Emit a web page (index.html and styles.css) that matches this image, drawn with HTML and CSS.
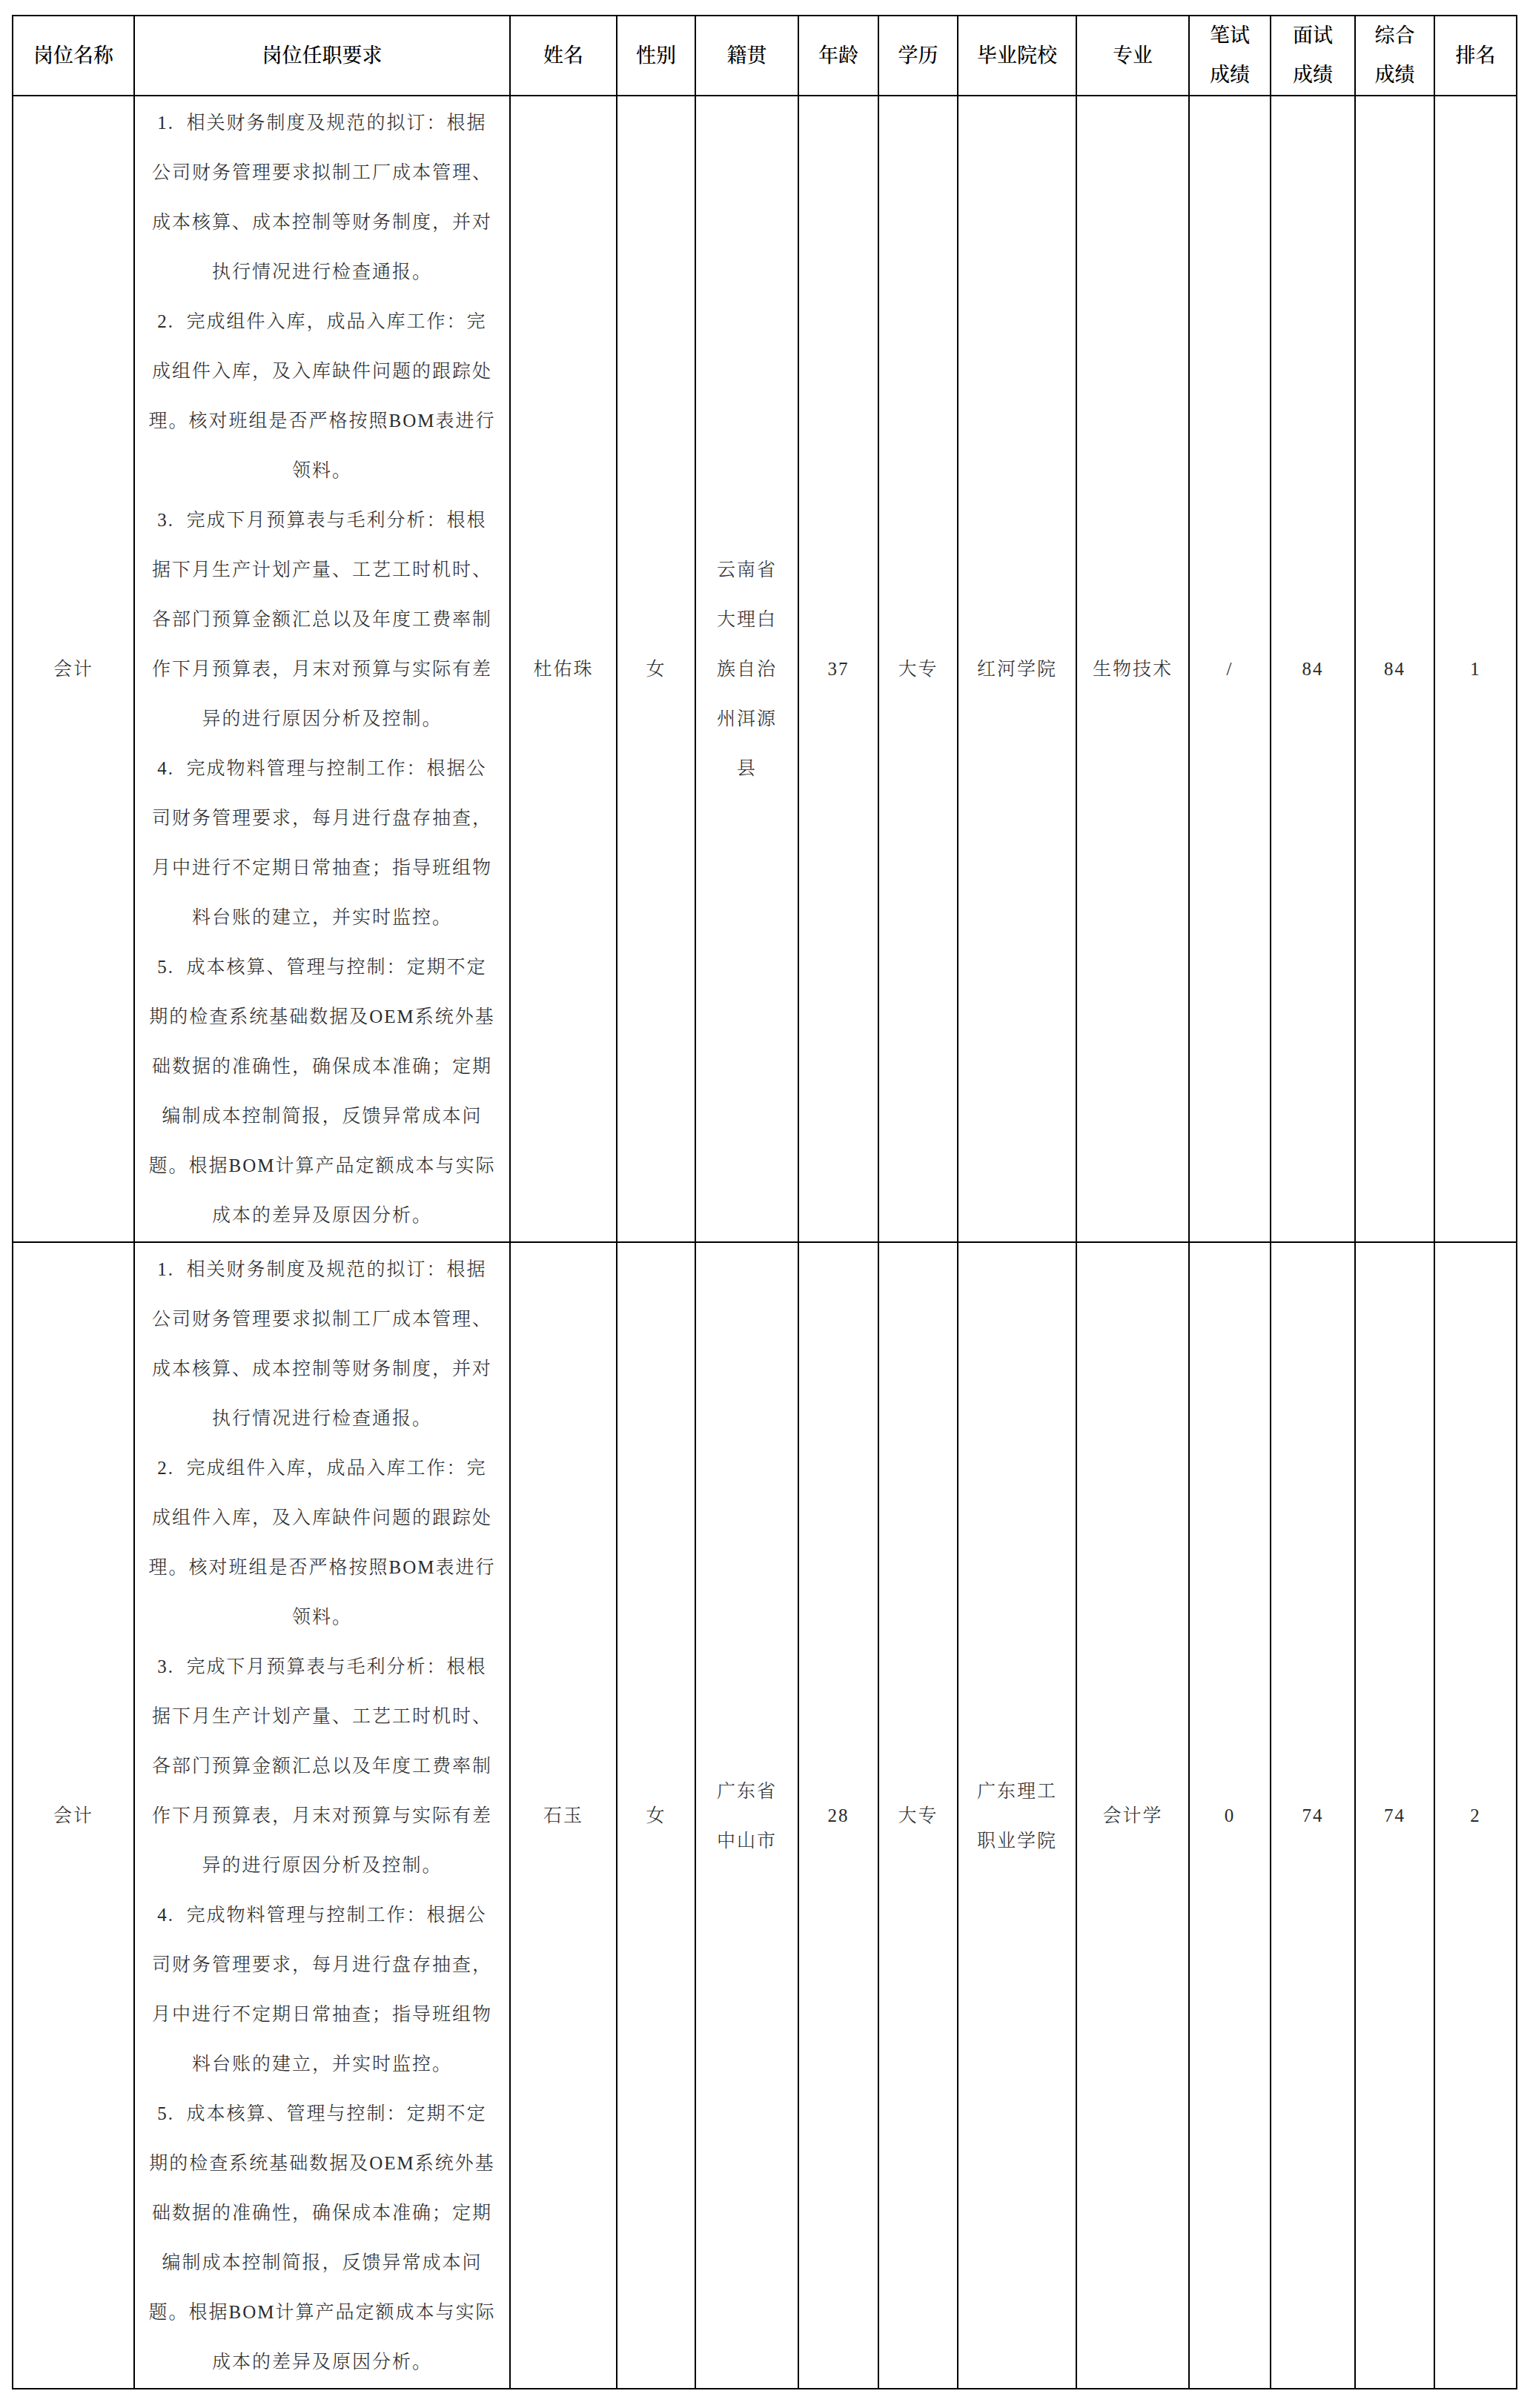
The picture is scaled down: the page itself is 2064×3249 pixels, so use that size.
FILE: index.html
```html
<!DOCTYPE html>
<html lang="zh-CN">
<head>
<meta charset="utf-8">
<title>岗位任职要求</title>
<link rel="stylesheet" href="styles.css">
</head>
<body>
<table class="grid">
  <colgroup>
    <col class="c1"><col class="c2"><col class="c3"><col class="c4"><col class="c5"><col class="c6"><col class="c7"><col class="c8"><col class="c9"><col class="c10"><col class="c11"><col class="c12"><col class="c13">
  </colgroup>
  <thead>
    <tr class="head">
      <th>岗位名称</th>
      <th>岗位任职要求</th>
      <th>姓名</th>
      <th>性别</th>
      <th>籍贯</th>
      <th>年龄</th>
      <th>学历</th>
      <th>毕业院校</th>
      <th>专业</th>
      <th>笔试<br>成绩</th>
      <th>面试<br>成绩</th>
      <th>综合<br>成绩</th>
      <th>排名</th>
    </tr>
  </thead>
  <tbody>
    <tr class="row">
      <td>会计</td>
      <td class="req">1.&nbsp; 相关财务制度及规范的拟订：根据<br>公司财务管理要求拟制工厂成本管理、<br>成本核算、成本控制等财务制度，并对<br>执行情况进行检查通报。<br>2.&nbsp; 完成组件入库，成品入库工作：完<br>成组件入库，及入库缺件问题的跟踪处<br>理。核对班组是否严格按照BOM表进行<br>领料。<br>3.&nbsp; 完成下月预算表与毛利分析：根根<br>据下月生产计划产量、工艺工时机时、<br>各部门预算金额汇总以及年度工费率制<br>作下月预算表，月末对预算与实际有差<br>异的进行原因分析及控制。<br>4.&nbsp; 完成物料管理与控制工作：根据公<br>司财务管理要求，每月进行盘存抽查，<br>月中进行不定期日常抽查；指导班组物<br>料台账的建立，并实时监控。<br>5.&nbsp; 成本核算、管理与控制：定期不定<br>期的检查系统基础数据及OEM系统外基<br>础数据的准确性，确保成本准确；定期<br>编制成本控制简报，反馈异常成本问<br>题。根据BOM计算产品定额成本与实际<br>成本的差异及原因分析。</td>
      <td>杜佑珠</td>
      <td>女</td>
      <td>云南省<br>大理白<br>族自治<br>州洱源<br>县</td>
      <td>37</td>
      <td>大专</td>
      <td>红河学院</td>
      <td>生物技术</td>
      <td>/</td>
      <td>84</td>
      <td>84</td>
      <td>1</td>
    </tr>
    <tr class="row">
      <td>会计</td>
      <td class="req">1.&nbsp; 相关财务制度及规范的拟订：根据<br>公司财务管理要求拟制工厂成本管理、<br>成本核算、成本控制等财务制度，并对<br>执行情况进行检查通报。<br>2.&nbsp; 完成组件入库，成品入库工作：完<br>成组件入库，及入库缺件问题的跟踪处<br>理。核对班组是否严格按照BOM表进行<br>领料。<br>3.&nbsp; 完成下月预算表与毛利分析：根根<br>据下月生产计划产量、工艺工时机时、<br>各部门预算金额汇总以及年度工费率制<br>作下月预算表，月末对预算与实际有差<br>异的进行原因分析及控制。<br>4.&nbsp; 完成物料管理与控制工作：根据公<br>司财务管理要求，每月进行盘存抽查，<br>月中进行不定期日常抽查；指导班组物<br>料台账的建立，并实时监控。<br>5.&nbsp; 成本核算、管理与控制：定期不定<br>期的检查系统基础数据及OEM系统外基<br>础数据的准确性，确保成本准确；定期<br>编制成本控制简报，反馈异常成本问<br>题。根据BOM计算产品定额成本与实际<br>成本的差异及原因分析。</td>
      <td>石玉</td>
      <td>女</td>
      <td>广东省<br>中山市</td>
      <td>28</td>
      <td>大专</td>
      <td>广东理工<br>职业学院</td>
      <td>会计学</td>
      <td>0</td>
      <td>74</td>
      <td>74</td>
      <td>2</td>
    </tr>
  </tbody>
</table>
</body>
</html>
```

FILE: styles.css
```css
html, body {
  margin: 0;
  padding: 0;
  background: #ffffff;
}

body {
  padding: 20px 0 0 16px;
  font-family: "Liberation Serif", "Noto Serif CJK SC", "Noto Sans CJK SC", serif;
}

.grid {
  border-collapse: collapse;
  table-layout: fixed;
  width: 2031px;
}

.c1 { width: 164px; }
.c2 { width: 507px; }
.c3 { width: 144px; }
.c4 { width: 106px; }
.c5 { width: 139px; }
.c6 { width: 108px; }
.c7 { width: 107px; }
.c8 { width: 160px; }
.c9 { width: 152px; }
.c10 { width: 110px; }
.c11 { width: 114px; }
.c12 { width: 107px; }
.c13 { width: 111px; }

.grid th,
.grid td {
  border: 2px solid #000;
  padding: 0;
  text-align: center;
  vertical-align: middle;
  white-space: nowrap;
}

.head {
  height: 107px;
}

.grid th {
  font-size: 27px;
  line-height: 53px;
  font-weight: 500;
  color: #000;
}

.row {
  height: 1547px;
}

.grid td {
  font-size: 25px;
  line-height: 67px;
  letter-spacing: 2px;
  font-weight: 300;
  color: #2a2a2a;
}
```
